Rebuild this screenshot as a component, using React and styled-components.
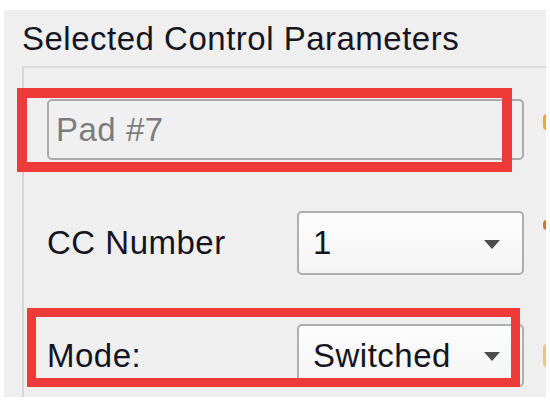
import React from "react";
import styled, { createGlobalStyle, css } from "styled-components";

const Global = createGlobalStyle`
  html, body { margin: 0; padding: 0; background: #ffffff; }
  body { font-family: "Liberation Sans", Arial, sans-serif; }
`;

const Panel = styled.section`
  margin: 10px 0 0 4px;
  width: 542px;
  height: 387px;
  background: #efefef;
  overflow: hidden;
  box-sizing: border-box;
  padding-top: 10px;
`;

const Title = styled.h2`
  margin: 0 0 8px 18px;
  font-weight: normal;
  font-size: 33px;
  line-height: 38px;
  letter-spacing: 0.5px;
  color: #161622;
`;

const Group = styled.div`
  margin-left: 18px;
  width: 600px;
  height: 400px;
  border-top: 2px solid #dcdcdc;
  border-left: 2px solid #d6d6d6;
  box-sizing: border-box;
  padding: 31px 0 0 23px;
  display: flex;
  flex-direction: column;
`;

const Row = styled.div`
  display: flex;
  align-items: center;
  margin-top: ${(p) => p.$gap || 0}px;
`;

const Marked = styled.div`
  position: relative;
  display: flex;
  align-items: center;
  &::after {
    content: "";
    position: absolute;
    pointer-events: none;
    z-index: 2;
    border: ${(p) => p.$w}px solid #ef3a3a;
    top: ${(p) => p.$t}px;
    left: ${(p) => p.$l}px;
    right: ${(p) => p.$r}px;
    bottom: ${(p) => p.$b}px;
  }
`;

const textStyle = css`
  font-size: 33px;
  line-height: 38px;
  letter-spacing: 0.5px;
`;

const TextField = styled.div`
  width: 477px;
  height: 61px;
  box-sizing: border-box;
  border: 2px solid #aaaaaa;
  border-radius: 5px;
  background: #f0f0f0;
  padding-left: 7px;
  display: flex;
  align-items: center;
  color: #7c7c80;
  ${textStyle};
`;

const Label = styled.div`
  width: 250px;
  color: #14141f;
  ${textStyle};
`;

const Select = styled.div`
  width: 227px;
  height: ${(p) => p.$h}px;
  box-sizing: border-box;
  border: 2px solid #aeaeae;
  border-radius: 5px;
  background: linear-gradient(#fdfdfd, #f4f4f4);
  display: flex;
  align-items: center;
  justify-content: space-between;
  padding: 0 22px 0 14px;
  color: #14141f;
  ${textStyle};
`;

const Arrow = styled.span`
  width: 0;
  height: 0;
  border-left: 8px solid transparent;
  border-right: 8px solid transparent;
  border-top: 9px solid #4d4d4d;
  margin-top: 2px;
`;

const Indicator = styled.span`
  margin-left: 19px;
  width: 10px;
  height: ${(p) => p.$h}px;
  border-radius: 4px;
  background: ${(p) => p.$c};
  align-self: center;
  transform: translateY(${(p) => p.$dy}px);
`;

export default function App() {
  return (
    <>
      <Global />
      <Panel>
        <Title>Selected Control Parameters</Title>
        <Group>
          <Row>
            <Marked $w={10} $t={-11} $l={-30} $r={12} $b={-12}>
              <TextField>Pad #7</TextField>
            </Marked>
            <Indicator $h={16} $c="#f0a338" $dy={-8} />
          </Row>
          <Row $gap={51}>
            <Label>CC Number</Label>
            <Select $h={64}>
              <span>1</span>
              <Arrow />
            </Select>
            <Indicator $h={10} $c="#c9772a" $dy={-18} />
          </Row>
          <Row $gap={49}>
            <Marked $w={9} $t={-16} $l={-20} $r={4} $b={0}>
              <Label>Mode:</Label>
              <Select $h={63}>
                <span>Switched</span>
                <Arrow />
              </Select>
            </Marked>
            <Indicator $h={23} $c="#e8c77e" $dy={0} />
          </Row>
        </Group>
      </Panel>
    </>
  );
}
